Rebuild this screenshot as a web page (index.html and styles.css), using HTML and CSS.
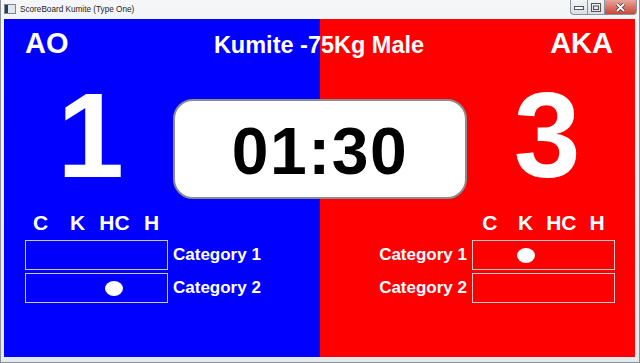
FILE: index.html
```html
<!DOCTYPE html>
<html lang="en">
<head>
<meta charset="UTF-8">
<title>ScoreBoard Kumite (Type One)</title>
<link rel="stylesheet" href="styles.css">
</head>
<body>
<div class="window">
    <div class="titlebar">
        <span class="app-icon"></span>
        <span class="title">ScoreBoard Kumite (Type One)</span>
        <div class="controls">
            <span class="ctl">
                <svg width="10" height="6" viewBox="0 0 10 6"><rect x="0.5" y="2.5" width="9" height="3" fill="#fff" stroke="#555"/></svg>
            </span>
            <span class="ctl">
                <svg width="10" height="9" viewBox="0 0 10 9"><rect x="0.5" y="0.5" width="9" height="8" fill="none" stroke="#555"/><rect x="2.5" y="3" width="5" height="3.5" fill="none" stroke="#555"/></svg>
            </span>
            <span class="ctl close">
                <svg width="11" height="9" viewBox="0 0 11 9"><path d="M2 1 L9 8 M9 1 L2 8" stroke="#333" stroke-width="3.2"/><path d="M2 1 L9 8 M9 1 L2 8" stroke="#fff" stroke-width="1.8"/></svg>
            </span>
        </div>
    </div>

    <div class="frame">
        <div class="board">
            <div class="header">
                <div class="side-name">AO</div>
                <div class="event">Kumite -75Kg Male</div>
                <div class="side-name right">AKA</div>
            </div>

            <div class="scores">
                <div class="score ao">1</div>
                <div class="timer">01:30</div>
                <div class="score aka">3</div>
            </div>

            <div class="penalties">
                <div class="pen-side ao">
                    <div class="pen-head"><span>C</span><span>K</span><span>HC</span><span>H</span></div>
                    <div class="pen-box"><span></span><span></span><span></span><span></span></div>
                    <div class="pen-label">Category 1</div>
                    <div class="pen-box"><span></span><span></span><span><i class="dot"></i></span><span></span></div>
                    <div class="pen-label">Category 2</div>
                </div>
                <div class="pen-side aka">
                    <div class="pen-head"><span>C</span><span>K</span><span>HC</span><span>H</span></div>
                    <div class="pen-label">Category 1</div>
                    <div class="pen-box"><span></span><span><i class="dot"></i></span><span></span><span></span></div>
                    <div class="pen-label">Category 2</div>
                    <div class="pen-box"><span></span><span></span><span></span><span></span></div>
                </div>
            </div>
        </div>
    </div>
</div>
</body>
</html>
```

FILE: styles.css
```css
html, body {
    margin: 0;
    padding: 0;
}

body {
    width: 640px;
    height: 363px;
    overflow: hidden;
    background-color: #e9edf1;
    font-family: "Liberation Sans", Arial, sans-serif;
}

.window {
    width: 640px;
    height: 363px;
    box-sizing: border-box;
    border: 1px solid #8a9199;
    border-top: none;
    background: linear-gradient(to bottom, #f4f6f8, #e4e9ee);
    display: flex;
    flex-direction: column;
}

/* title bar */
.titlebar {
    height: 18px;
    display: flex;
    align-items: center;
    padding-left: 3px;
}

.app-icon {
    width: 10px;
    height: 8px;
    margin-right: 4px;
    border: 1px solid #7d8791;
    background: linear-gradient(to right, #2a3d57 35%, #dfe6ee 35%);
}

.title {
    font-size: 8.2px;
    color: #1e1e1e;
    margin-top: 1px;
}

.controls {
    margin-left: auto;
    align-self: flex-start;
    display: flex;
    margin-right: 2px;
}

.ctl {
    width: 16px;
    height: 14px;
    display: flex;
    align-items: center;
    justify-content: center;
    border: 1px solid #8d949c;
    border-top: none;
    border-left: none;
    background: linear-gradient(to bottom, #f3f5f7, #dadfe5);
}

.ctl:first-child {
    border-left: 1px solid #8d949c;
    border-bottom-left-radius: 4px;
}

.ctl.close {
    width: 31px;
    border-bottom-right-radius: 4px;
    background: linear-gradient(to bottom, #e9a59a, #c9463a);
}

/* board */
.frame {
    flex: 1;
    padding: 1px 4px 5px 3px;
}

.board {
    height: 338px;
    background: linear-gradient(to right, #0000ff 316px, #ff0000 316px);
    color: #fff;
    font-weight: bold;
}

.header {
    display: grid;
    grid-template-columns: 1fr auto 1fr;
    align-items: baseline;
    padding: 8px 22px 0 21px;
}

.side-name {
    font-size: 29px;
    line-height: 32px;
}

.side-name.right {
    text-align: right;
}

.event {
    font-size: 23.5px;
    line-height: 32px;
}

.scores {
    display: grid;
    grid-template-columns: 169px 294px 168px;
    margin-top: 14px;
}

.score {
    font-size: 120px;
    line-height: 120px;
    text-align: center;
}

.score.ao {
    padding-left: 4px;
}

.score.aka {
    padding-right: 8px;
}

.timer {
    margin-top: 24px;
    height: 100px;
    box-sizing: border-box;
    border: 2px solid #8c8c8c;
    border-radius: 20px;
    background-color: #fff;
    color: #000;
    font-size: 66px;
    line-height: 66px;
    letter-spacing: 1.5px;
    display: flex;
    align-items: center;
    justify-content: center;
    padding-top: 4px;
}

.penalties {
    display: grid;
    grid-template-columns: 1fr 1fr;
    margin-top: 13px;
}

.pen-side {
    display: grid;
    row-gap: 3px;
    column-gap: 5px;
    align-items: center;
}

.pen-side.ao {
    grid-template-columns: 143px auto;
    justify-content: start;
    padding-left: 21px;
}

.pen-side.aka {
    grid-template-columns: auto 143px;
    justify-content: end;
    padding-right: 20px;
}

.pen-head {
    display: grid;
    grid-template-columns: repeat(4, 1fr);
    text-align: center;
    font-size: 21px;
    line-height: 21px;
    margin-bottom: 4px;
}

.pen-side.ao .pen-head {
    grid-column: 1;
    grid-row: 1;
    grid-template-columns: repeat(4, 37px);
    margin-left: -3px;
}

.pen-side.aka .pen-head {
    grid-column: 2;
}

.pen-box {
    height: 30px;
    box-sizing: border-box;
    border: 1px solid #c8c8c8;
    display: grid;
    grid-template-columns: repeat(4, 1fr);
    align-items: center;
    justify-items: center;
}

.pen-side.ao .pen-box {
    grid-column: 1;
}

.pen-label {
    font-size: 17px;
}

.pen-side.aka .pen-label {
    text-align: right;
}

.pen-side.ao .pen-label {
    grid-column: 2;
}

.dot {
    display: block;
    width: 18px;
    height: 15px;
    border-radius: 50%;
    background-color: #fff;
}
```
